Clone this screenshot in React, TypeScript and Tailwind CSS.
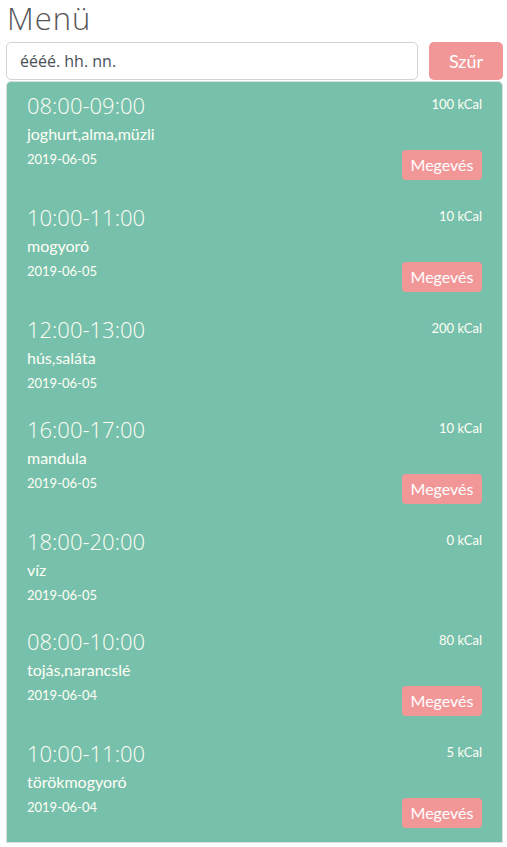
import React from "react";

interface Meal {
  time: string;
  food: string;
  date: string;
  kcal: number;
  eatable: boolean;
}

const meals: Meal[] = [
  { time: "08:00-09:00", food: "joghurt,alma,müzli", date: "2019-06-05", kcal: 100, eatable: true },
  { time: "10:00-11:00", food: "mogyoró", date: "2019-06-05", kcal: 10, eatable: true },
  { time: "12:00-13:00", food: "hús,saláta", date: "2019-06-05", kcal: 200, eatable: false },
  { time: "16:00-17:00", food: "mandula", date: "2019-06-05", kcal: 10, eatable: true },
  { time: "18:00-20:00", food: "víz", date: "2019-06-05", kcal: 0, eatable: false },
  { time: "08:00-10:00", food: "tojás,narancslé", date: "2019-06-04", kcal: 80, eatable: true },
  { time: "10:00-11:00", food: "törökmogyoró", date: "2019-06-04", kcal: 5, eatable: true },
];

export default function App() {
  return (
    <div className="h-[847px] overflow-hidden bg-white pl-[6px] pr-[4px] font-['Lato','Open_Sans',sans-serif]">
      <h1 className="h-[42px] pl-[1px] pt-[1px] text-[31px] leading-[34px] font-light tracking-[1px] text-[#555] font-['Open_Sans','Lato',sans-serif]">
        Menü
      </h1>

      <div className="flex gap-[11px]">
        <input
          type="text"
          placeholder="éééé. hh. nn."
          className="h-[38px] flex-1 rounded-[5px] border border-[#ced4da] px-[13px] text-[16px] text-[#495057] placeholder:text-[#495057] outline-none font-['Open_Sans',sans-serif]"
        />
        <button className="h-[38px] w-[74px] rounded-[5px] bg-[#f29798] text-[18px] text-white">
          Szűr
        </button>
      </div>

      <div className="mt-[1px] rounded-t-[5px] border border-[#dcdcdc] bg-[#77c1ac] text-[#fffef5]">
        {meals.map((m, i) => (
          <div key={i} className="px-[20px] pt-[10px] pb-[14px]">
            <div className="flex items-center justify-between h-[26px]">
              <span className="text-[22px] leading-[26px] font-light font-['Open_Sans',sans-serif]">{m.time}</span>
              <span className="text-[13px] leading-[16px] -mt-[2px]">{m.kcal} kCal</span>
            </div>
            <div className="mt-[5px] text-[16px] leading-[22px]">{m.food}</div>
            <div className="mt-[5px] flex items-start justify-between">
              <span className="text-[13px] leading-[18px]">{m.date}</span>
              {m.eatable && (
                <button className="h-[30px] w-[80px] rounded-[4px] bg-[#f29798] text-[16px] text-white">
                  Megevés
                </button>
              )}
            </div>
          </div>
        ))}
      </div>
    </div>
  );
}
